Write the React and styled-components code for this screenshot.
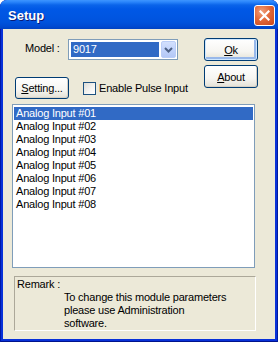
import React from 'react';
import styled, { createGlobalStyle } from 'styled-components';

const GlobalStyle = createGlobalStyle`
  html, body {
    margin: 0;
    padding: 0;
    background: #ffffff;
  }
  body {
    font-family: "Liberation Sans", Arial, sans-serif;
    font-size: 11px;
    letter-spacing: -0.2px;
    color: #000;
  }
`;

const Window = styled.div`
  width: 278px;
  height: 342px;
  box-sizing: border-box;
  display: flex;
  flex-direction: column;
  border-radius: 7px 7px 0 0;
  background: #0831d9;
  box-shadow: inset 1px 0 0 #0019a8, inset -1px 0 0 #001b9e, inset 0 -1px 0 #00138c;
  overflow: hidden;
`;

const TitleBar = styled.div`
  height: 29px;
  flex-shrink: 0;
  display: flex;
  align-items: center;
  padding: 2px 3px 0 8px;
  box-sizing: border-box;
  background: linear-gradient(
    to bottom,
    #3d95ff 0px,
    #2a85fb 2px,
    #0a64ea 5px,
    #0058e6 9px,
    #0056e2 16px,
    #0053dd 22px,
    #004bd3 26px,
    #0042c2 29px
  );
`;

const Title = styled.span`
  flex: 1;
  color: #ffffff;
  font-weight: bold;
  font-size: 13px;
  letter-spacing: 0;
  text-shadow: 1px 1px 0 #0a1b76;
`;

const CloseButton = styled.div`
  width: 21px;
  height: 21px;
  box-sizing: border-box;
  border: 1px solid #ffffff;
  border-radius: 3px;
  background: radial-gradient(circle at 35% 30%, #f0a07c 0%, #e2693a 45%, #c8451a 100%);
  display: flex;
  align-items: center;
  justify-content: center;
  margin-top: -1px;
`;

const Client = styled.div`
  flex: 1;
  margin: 0 3px 3px;
  background: #ece9d8;
  display: flex;
  flex-direction: column;
  padding: 0 17px 0 9px;
`;

const Top = styled.div`
  display: grid;
  grid-template-columns: 1fr 54px;
  height: 75px;
`;

const LeftCol = styled.div`
  display: flex;
  flex-direction: column;
`;

const ModelRow = styled.div`
  display: flex;
  align-items: center;
  margin-top: 10px;
  height: 21px;
`;

const Label = styled.span`
  width: 43px;
  margin-left: 13px;
  margin-top: -3px;
`;

const Combo = styled.div`
  width: 110px;
  height: 21px;
  box-sizing: border-box;
  border: 1px solid #7f9db9;
  background: #ffffff;
  display: flex;
  align-items: center;
  padding: 1px 1px 1px 2px;
`;

const ComboValue = styled.div`
  flex: 1;
  height: 15px;
  background: #316ac5;
  color: #ffffff;
  line-height: 15px;
  padding-left: 2px;
  margin-right: 2px;
`;

const DropButton = styled.div`
  width: 15px;
  height: 17px;
  box-sizing: border-box;
  border: 1px solid #bacdf7;
  border-radius: 2px;
  background: linear-gradient(to bottom, #d3e0fd 0%, #c1d3fb 50%, #b4c8f6 100%);
  display: flex;
  align-items: center;
  justify-content: center;
`;

const SettingRow = styled.div`
  display: flex;
  align-items: center;
  margin-top: 17px;
  margin-left: 3px;
  height: 22px;
`;

const Button = styled.div`
  width: ${(p) => p.$w || 54}px;
  height: ${(p) => p.$h || 23}px;
  box-sizing: border-box;
  border: 1px solid #003c74;
  border-radius: 3px;
  background: linear-gradient(to bottom, #ffffff 0%, #f6f5f1 60%, #e3e1d6 100%);
  box-shadow: inset -1px -1px 0 #d6d0c5;
  display: flex;
  align-items: center;
  justify-content: center;
  font-size: 11px;
  flex-shrink: 0;

  u {
    text-decoration: underline;
  }
`;

const PrimaryButton = styled(Button)`
  box-shadow: inset 0 0 0 1px #cee7ff, inset -1px -1px 0 2px #98b8ea;
`;

const RightCol = styled.div`
  display: flex;
  flex-direction: column;
  gap: 4px;
  padding-top: 9px;
`;

const Check = styled.div`
  width: 13px;
  height: 13px;
  box-sizing: border-box;
  border: 1px solid #1c5180;
  background: linear-gradient(135deg, #dcdcd7 0%, #f5f5f3 60%, #ffffff 100%);
  margin-left: 14px;
  margin-right: 3px;
`;

const ListBox = styled.div`
  height: 164px;
  margin-right: 3px;
  box-sizing: border-box;
  border: 1px solid #7f9db9;
  background: #ffffff;
  padding: 2px 1px;
`;

const ListItem = styled.div`
  height: 13px;
  line-height: 13px;
  padding-left: 2px;
  background: ${(p) => (p.$selected ? '#316ac5' : 'transparent')};
  color: ${(p) => (p.$selected ? '#ffffff' : '#000000')};
`;

const RemarkBox = styled.div`
  margin: 8px 2px 0;
  height: 55px;
  box-sizing: border-box;
  border-top: 1px solid #aca899;
  border-left: 1px solid #aca899;
  border-right: 1px solid #ffffff;
  border-bottom: 1px solid #ffffff;
  padding: 1px 2px;
  line-height: 13px;
`;

const RemarkText = styled.div`
  padding-left: 47px;
`;

const items = [1, 2, 3, 4, 5, 6, 7, 8].map((n) => `Analog Input #0${n}`);

export default function App() {
  return (
    <>
      <GlobalStyle />
      <Window>
        <TitleBar>
          <Title>Setup</Title>
          <CloseButton>
            <svg width="11" height="11" viewBox="0 0 11 11">
              <path d="M1.5 1.5 L9.5 9.5 M9.5 1.5 L1.5 9.5" stroke="#fff" strokeWidth="2.2" strokeLinecap="square" />
            </svg>
          </CloseButton>
        </TitleBar>
        <Client>
          <Top>
            <LeftCol>
              <ModelRow>
                <Label>Model :</Label>
                <Combo>
                  <ComboValue>9017</ComboValue>
                  <DropButton>
                    <svg width="9" height="6" viewBox="0 0 9 6">
                      <path d="M1 1 L4.5 4.5 L8 1" stroke="#4d6185" strokeWidth="2" fill="none" />
                    </svg>
                  </DropButton>
                </Combo>
              </ModelRow>
              <SettingRow>
                <Button $w={54} $h={22}>
                  <span><u>S</u>etting...</span>
                </Button>
                <Check />
                <span>Enable Pulse Input</span>
              </SettingRow>
            </LeftCol>
            <RightCol>
              <PrimaryButton>
                <span><u>O</u>k</span>
              </PrimaryButton>
              <Button>
                <span><u>A</u>bout</span>
              </Button>
            </RightCol>
          </Top>
          <ListBox>
            {items.map((t, i) => (
              <ListItem key={t} $selected={i === 0}>{t}</ListItem>
            ))}
          </ListBox>
          <RemarkBox>
            <div>Remark :</div>
            <RemarkText>To change this module parameters</RemarkText>
            <RemarkText>please use Administration</RemarkText>
            <RemarkText>software.</RemarkText>
          </RemarkBox>
        </Client>
      </Window>
    </>
  );
}
